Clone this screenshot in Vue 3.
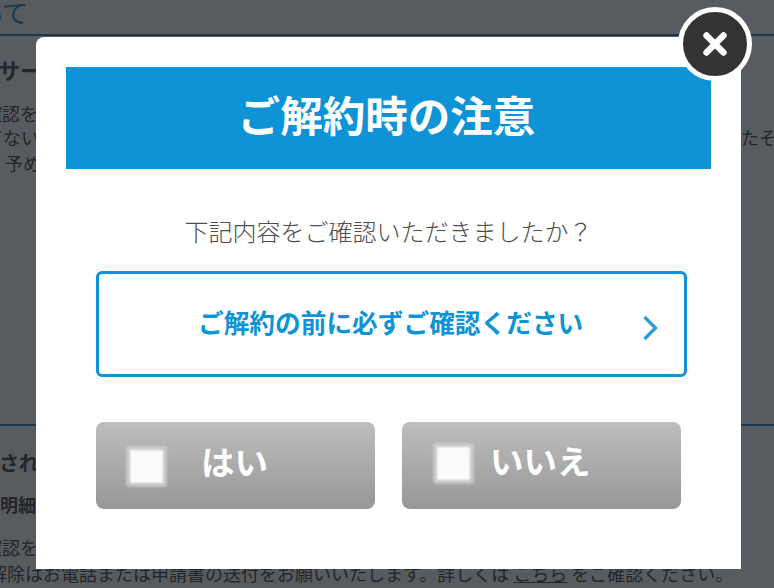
<script setup>
const choices = [
  { label: 'はい', cls: 'yes' },
  { label: 'いいえ', cls: 'no' },
]
</script>

<template>
  <div class="page">
    <div class="bg">
      <h2 class="bg-title">について</h2>
      <h3 class="bg-h3 first">サービス</h3>
      <p class="line l1">確認をお願いいたします。</p>
      <p class="line l2">てないサービスをご解約される場合は、事前に契約内容をご確認ください。ご解約後に発生したその他の費用</p>
      <p class="line l3">、予めご了承ください。</p>
      <div class="rule"></div>
      <h3 class="bg-h3 second">された</h3>
      <h4 class="bg-h4">明細</h4>
      <p class="line l4">確認をお願いいたします。</p>
      <p class="line l5">解除はお電話または申請書の送付をお願いいたします。詳しくは <u>こちら</u> をご確認ください。</p>
    </div>

    <div class="overlay">
      <div class="modal">
        <h1 class="head">ご解約時の注意</h1>
        <p class="prompt">下記内容をご確認いただきましたか？</p>
        <a class="link">
          <span>ご解約の前に必ずご確認ください</span>
          <svg class="chev" viewBox="0 0 16 26" width="16" height="26" aria-hidden="true">
            <path d="M2.5 2 L13.5 13 L2.5 24" fill="none" stroke="#2f9cda" stroke-width="3.4" />
          </svg>
        </a>
        <div class="choices">
          <label v-for="c in choices" :key="c.label" class="choice" :class="c.cls">
            <span class="box"></span>
            <span class="txt">{{ c.label }}</span>
          </label>
        </div>
        <button class="close" aria-label="閉じる">
          <svg viewBox="0 0 24 24" width="24" height="24" aria-hidden="true">
            <path d="M3.5 3.5 L20.5 20.5 M20.5 3.5 L3.5 20.5" stroke="#fff" stroke-width="6.4" stroke-linecap="round" fill="none" />
          </svg>
        </button>
      </div>
    </div>
  </div>
</template>

<style>
html, body { margin: 0; padding: 0; background: #fff; }
</style>

<style scoped>
.page {
  position: relative;
  width: 774px;
  height: 588px;
  overflow: hidden;
  background: #fff;
  font-family: "Noto Sans CJK JP", "Noto Sans", sans-serif;
  color: #333;
}
.bg { white-space: nowrap; }
.bg-title {
  margin: -7px -10px 0 -75px;
  height: 41px;
  font-size: 26px;
  line-height: 38px;
  font-weight: 400;
  color: #0a7dbb;
  border-bottom: 2px solid #0a7dbb;
  box-sizing: content-box;
}
.bg-h3 { font-size: 20px; line-height: 30px; font-weight: 700; margin: 0; }
.bg-h3.first { margin-top: 18px; font-size: 22px; margin-left: -2px; }
.bg-h3.second { margin: 22px 0 0 -1px; }
.bg-h4 { font-size: 18px; line-height: 26px; font-weight: 700; margin: 13px 0 0; }
.line { font-size: 18px; line-height: 25px; margin: 0; }
.l1 { margin-top: 17px; margin-left: -16px; }
.l2 { margin-left: -15px; margin-top: -1px; }
.l3 { margin-left: -13px; margin-top: 1px; }
.l4 { margin-top: 18px; margin-left: -16px; }
.l5 { margin-left: -11px; margin-top: 1px; }
.rule { height: 2px; background: #0a7dbb; margin-top: 248px; }

.overlay {
  position: absolute;
  inset: 0;
  background: rgba(30, 34, 39, 0.74);
  padding: 37px 0 0 36px;
  box-sizing: border-box;
}
.modal {
  position: relative;
  width: 705px;
  height: 532px;
  box-sizing: border-box;
  padding: 30px;
  background: #fff;
  border-radius: 8px 8px 0 0;
  display: flex;
  flex-direction: column;
  align-items: stretch;
}
.head {
  margin: 0;
  height: 102px;
  background: #0e93d6;
  color: #fff;
  font-size: 42.5px;
  font-weight: 700;
  line-height: 94px;
  text-align: center;
  padding-right: 4px;
}
.prompt {
  margin: 44px 0 0;
  font-size: 24px;
  line-height: 36px;
  font-weight: 300;
  color: #4d4d4d;
  text-align: center;
}
.link {
  margin: 22px 24px 0 30px;
  height: 106px;
  box-sizing: border-box;
  border: 3px solid #0e93d6;
  border-radius: 6px;
  display: flex;
  align-items: center;
  color: #0e93d6;
  font-size: 25.7px;
  font-weight: 700;
  padding-left: 99px;
  position: relative;
}
.link span { position: relative; top: -3px; }
.chev { position: absolute; left: 543px; top: 41px; }
.choices {
  margin: 45px 30px 0;
  display: grid;
  grid-template-columns: 279px 279px;
  column-gap: 27px;
}
.choice {
  height: 87px;
  border-radius: 8px;
  background: linear-gradient(#bdbdbd, #979797);
  display: flex;
  align-items: center;
  color: #fff;
  font-size: 33.5px;
  font-weight: 700;
}
.box {
  width: 33px;
  height: 33px;
  background: #fbfbfb;
  box-shadow: 0 0 0 4px rgba(208, 208, 208, 0.8);
  border-radius: 1px;
  filter: blur(0.8px);
}
.yes .box { margin: 2px 0 0 34px; }
.yes .txt { margin-left: 38px; top: -5px; }
.no .box { margin: 0 0 5px 35px; }
.no .txt { margin-left: 20px; top: -6px; }
.txt { position: relative; }
.close {
  position: absolute;
  right: -11px;
  top: -30px;
  width: 74px;
  height: 74px;
  box-sizing: border-box;
  border: 5px solid #fff;
  border-radius: 50%;
  background: #333;
  display: flex;
  align-items: center;
  justify-content: center;
  padding: 0;
}
</style>
